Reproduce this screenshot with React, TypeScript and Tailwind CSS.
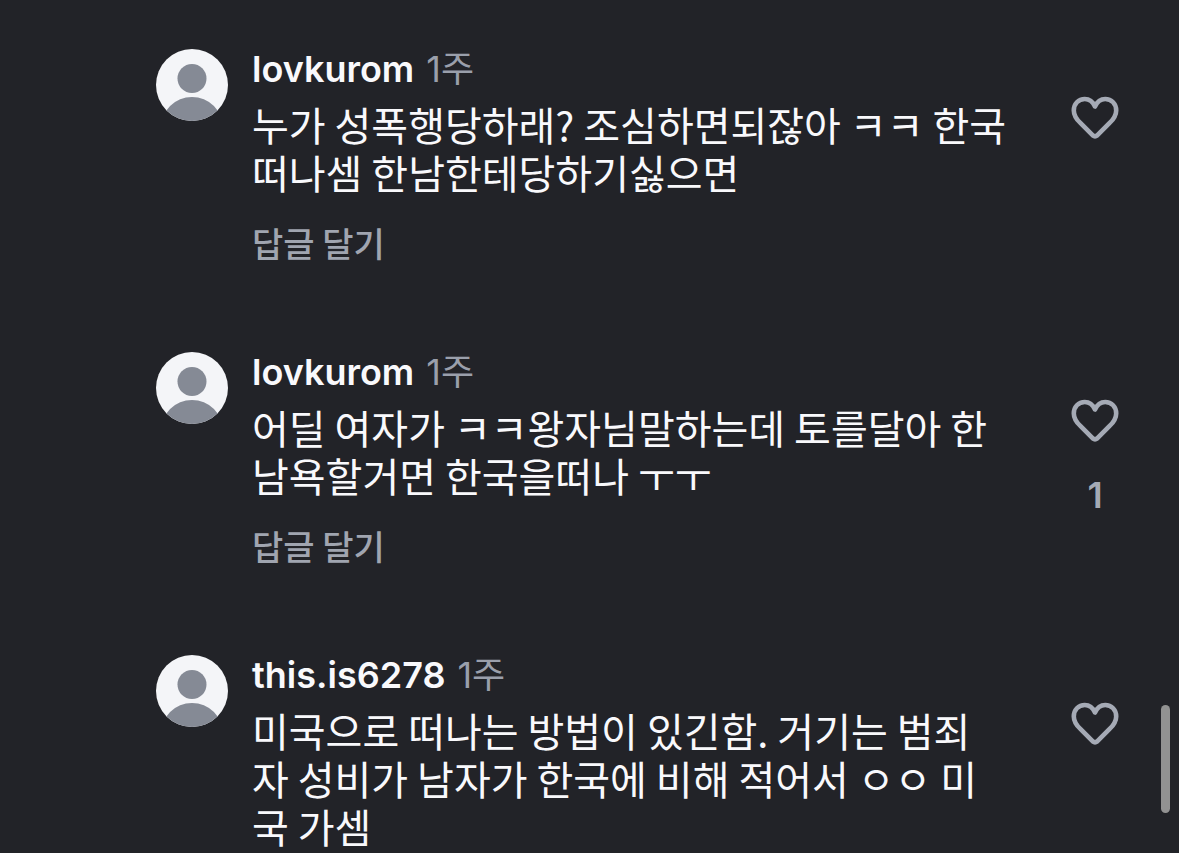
type Comment = {
    id: number;
    user: string;
    time: string;
    text: string;
    likes?: number;
    canReply?: boolean;
};

const comments: Comment[] = [
    {
        id: 1,
        user: "lovkurom",
        time: "1주",
        text: "누가 성폭행당하래? 조심하면되잖아 ㅋㅋ 한국\n떠나셈 한남한테당하기싫으면",
        canReply: true,
    },
    {
        id: 2,
        user: "lovkurom",
        time: "1주",
        text: "어딜 여자가 ㅋㅋ왕자님말하는데 토를달아 한\n남욕할거면 한국을떠나 ㅜㅜ",
        likes: 1,
        canReply: true,
    },
    {
        id: 3,
        user: "this.is6278",
        time: "1주",
        text: "미국으로 떠나는 방법이 있긴함. 거기는 범죄\n자 성비가 남자가 한국에 비해 적어서 ㅇㅇ 미\n국 가셈",
    },
];

function Avatar() {
    return (
        <svg viewBox="0 0 72 72" className="h-18 w-18 shrink-0 rounded-full bg-[#f4f5f8]" aria-hidden="true">
            <circle cx="36" cy="29.5" r="14.5" fill="#858a95" />
            <circle cx="36" cy="79" r="31" fill="#858a95" />
        </svg>
    );
}

function HeartIcon() {
    return (
        <svg viewBox="0 0 48 44" className="h-11 w-12" fill="none" stroke="#a5aab5" strokeWidth="4.6" strokeLinejoin="round" aria-hidden="true">
            <path d="M24 10.5C21.8 5.6 18.2 3 13.8 3C7.4 3 2.8 7.8 2.8 14.4C2.8 19.4 5.4 23.2 9.6 27.2L21.8 39.4Q24 41.2 26.2 39.4L38.4 27.2C42.6 23.2 45.2 19.4 45.2 14.4C45.2 7.8 40.6 3 34.2 3C29.8 3 26.2 5.6 24 10.5Z" />
        </svg>
    );
}

function CommentItem({ comment }: { comment: Comment }) {
    return (
        <article className="flex items-start">
            <Avatar />

            {/* Texto */}
            <div className="ml-6 min-w-0 flex-1">
                <div className="flex h-10 items-baseline gap-3 font-['Inter','Noto_Sans_CJK_KR',sans-serif] text-[36px] leading-10">
                    <h2 className="font-semibold">{comment.user}</h2>
                    <span className="text-[#9a9fab]">{comment.time}</span>
                </div>
                <p className="mt-[11px] text-[40px] leading-12 whitespace-pre">{comment.text}</p>
                {comment.canReply && (
                    <button type="button" className="mt-[23px] block text-[34px] leading-12 font-medium text-[#a0a5b0]">
                        답글 달기
                    </button>
                )}
            </div>

            {/* Me gusta */}
            <div className="mt-[47px] flex shrink-0 flex-col items-center text-[#a5aab5]">
                <button type="button" aria-label="좋아요">
                    <HeartIcon />
                </button>
                {comment.likes && (
                    <span className="mt-7 font-['Inter',sans-serif] text-[36px] leading-12 font-semibold">{comment.likes}</span>
                )}
            </div>
        </article>
    );
}

export default function App() {
    return (
        <div className="relative h-screen overflow-hidden bg-[#222328] font-['Noto_Sans_CJK_KR',sans-serif] text-[#f9f9fc]">
            <main className="flex flex-col gap-[85px] pt-[49px] pr-15 pl-39">
                {comments.map((comment) => (
                    <CommentItem key={comment.id} comment={comment} />
                ))}
            </main>

            {/* Barra de scroll */}
            <div className="absolute right-[9px] bottom-10 h-[108px] w-[9px] rounded-full bg-[#929292]" />
        </div>
    );
}
